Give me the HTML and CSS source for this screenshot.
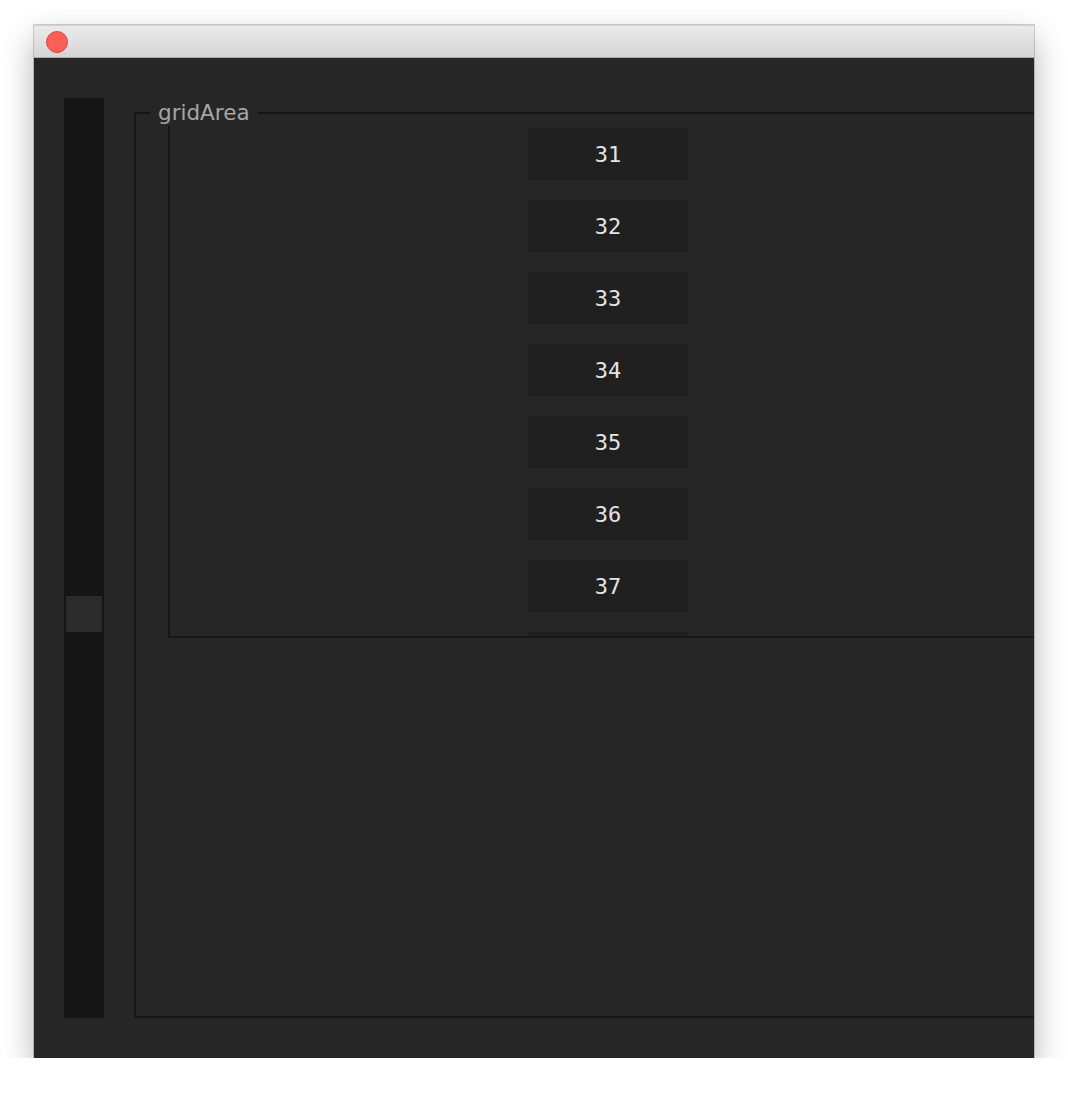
FILE: index.html
```html
<!DOCTYPE html>
<html lang="en">
<head>
    <meta charset="UTF-8">
    <meta name="viewport" content="width=device-width, initial-scale=1.0">
    <title>gridArea</title>
    <link rel="stylesheet" href="styles.css">
</head>
<body>
    <div class="window">
        <div class="titlebar">
            <span class="close-btn"></span>
        </div>
        <div class="content">
            <div class="slider">
                <div class="slider-thumb"></div>
            </div>
            <div class="group">
                <span class="group-label">gridArea</span>
                <div class="scroll-area">
                    <div class="cell-list">
                        <div class="cell">31</div>
                        <div class="cell">32</div>
                        <div class="cell">33</div>
                        <div class="cell">34</div>
                        <div class="cell">35</div>
                        <div class="cell">36</div>
                        <div class="cell">37</div>
                        <!-- next row is scrolled out of view -->
                        <div class="cell"></div>
                    </div>
                </div>
            </div>
        </div>
    </div>
</body>
</html>
```

FILE: styles.css
```css
body {
    margin: 0;
    padding: 0;
    background-color: #fff;
    font-family: "DejaVu Sans", Arial, sans-serif;
}

.window {
    width: 1000px;
    margin: 25px 0 0 34px;
    box-shadow: 0 0 0 1px rgba(0, 0, 0, 0.18), 0 14px 30px rgba(0, 0, 0, 0.3);
}

.titlebar {
    height: 33px;
    box-sizing: border-box;
    border-top: 1px solid #d0d0d0;
    border-bottom: 1px solid #acacac;
    background: linear-gradient(#ebebeb, #d5d5d5);
    display: flex;
    align-items: center;
    padding-left: 12px;
}

.close-btn {
    width: 20px;
    height: 20px;
    border-radius: 50%;
    background-color: #fc5f57;
    border: 1px solid #e2463f;
}

.content {
    height: 1000px;
    background-color: #262626;
    overflow: hidden;
    display: flex;
    align-items: flex-start;
    gap: 30px;
    padding: 40px 0 0 30px;
    box-sizing: border-box;
}

.slider {
    width: 40px;
    height: 920px;
    flex-shrink: 0;
    background-color: #151515;
    display: flex;
    justify-content: center;
    padding-top: 498px;
    box-sizing: border-box;
}

.slider-thumb {
    width: 36px;
    height: 36px;
    background-color: #2b2b2b;
}

.group {
    position: relative;
    flex-shrink: 0;
    width: 1000px;
    height: 906px;
    margin-top: 14px;
    box-sizing: border-box;
    border: 2px solid #161616;
}

.group-label {
    position: absolute;
    top: -14px;
    left: 14px;
    padding: 0 8px;
    background-color: #262626;
    color: #a6a6a6;
    font-size: 21.5px;
    line-height: 26px;
}

.scroll-area {
    margin-left: 32px;
    width: 876px;
    height: 522px;
    border: 2px solid #161616;
    border-top: none;
    overflow: hidden;
}

.cell-list {
    display: flex;
    flex-direction: column;
    align-items: center;
    gap: 20px;
    padding-top: 14px;
}

.cell {
    width: 160px;
    height: 52px;
    flex-shrink: 0;
    background-color: #202020;
    color: #e4e4e4;
    font-family: "DejaVu Sans Mono", "Liberation Mono", monospace;
    font-size: 22px;
    display: flex;
    align-items: center;
    justify-content: center;
}
```
